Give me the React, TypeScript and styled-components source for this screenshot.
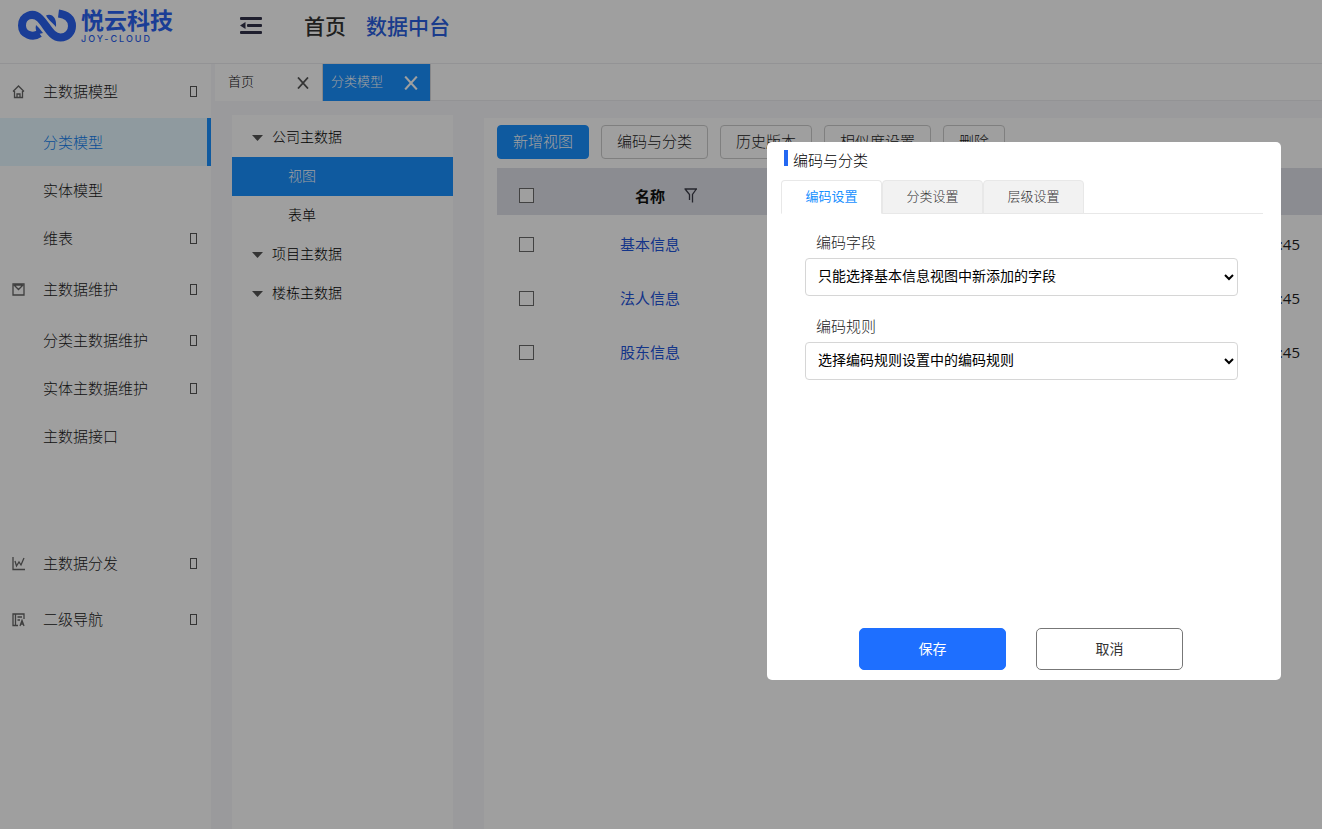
import React from "react";
import styled, { createGlobalStyle, css } from "styled-components";

const GlobalStyle = createGlobalStyle`
  *, *::before, *::after { box-sizing: border-box; }
  body {
    margin: 0;
    background: #f7f7fb;
    color: #222;
    font-family: "Noto Sans CJK SC", "Microsoft YaHei", sans-serif;
    font-size: 15px;
    line-height: 20px;
    font-weight: 300;
    overflow: hidden;
  }
  button, select, input { font: inherit; color: inherit; }
  a { text-decoration: none; color: inherit; }
  h2, ul { margin: 0; padding: 0; font: inherit; }
  ul { list-style: none; }
`;

const Page = styled.div`
  display: flex;
  flex-direction: column;
  height: 100vh;
`;

const Header = styled.header`
  display: flex;
  align-items: flex-start;
  height: 64px;
  padding: 0 18px;
  background: #fff;
  border-bottom: 1px solid #ececef;
`;

const Logo = styled.a`
  display: flex;
  gap: 4px;
  width: 222px;
  padding-top: 9px;
  color: #2a62f0;
`;

const LogoWords = styled.span`
  display: flex;
  flex-direction: column;
`;

const LogoName = styled.span`
  font-family: "Liberation Sans", "Noto Sans CJK SC", sans-serif;
  font-size: 23px;
  line-height: 24px;
  font-weight: 700;
`;

const LogoSub = styled.span`
  font-family: "Inter", sans-serif;
  font-size: 9px;
  line-height: 12px;
  letter-spacing: 2px;
  font-weight: 500;
`;

const IconButton = styled.button`
  display: flex;
  padding: 0;
  border: 0;
  background: none;
  color: inherit;
  cursor: pointer;
`;

const MenuButton = styled(IconButton)`
  width: 64px;
  padding-top: 16px;
  color: #33334a;
`;

const TopNav = styled.nav`
  display: flex;
  gap: 20px;
  padding-top: 10px;
  font-size: 21px;
  line-height: 30px;
  font-weight: 500;
`;

const TopLink = styled.a<{ $active?: boolean }>`
  color: ${(p) => (p.$active ? "#2a5fe0" : "#333")};
`;

const Body = styled.div`
  display: flex;
  flex: 1;
  min-height: 0;
`;

const Sidebar = styled.nav`
  flex: none;
  width: 211px;
  background: #fff;
`;

const MenuGroup = styled.div<{ $tail?: boolean }>`
  padding-bottom: ${(p) => (p.$tail ? 75 : 0)}px;
`;

const MenuRow = styled.a<{ $size: number; $active?: boolean }>`
  display: flex;
  align-items: center;
  height: ${(p) => p.$size}px;
  padding: 0 14px 0 11px;
  color: #222;
  ${(p) =>
    p.$active &&
    css`
      color: #1080f0;
      background: #e6f7ff;
      border-right: 4px solid #1890ff;
    `}
`;

const MenuIcon = styled.span`
  display: flex;
  width: 32px;
  color: #666;
`;

const MissingGlyph = styled.span`
  width: 7px;
  height: 11px;
  margin-left: auto;
  border: 1px solid #555;
`;

const Workspace = styled.main`
  display: flex;
  flex-direction: column;
  flex: 1;
  min-width: 0;
  padding-left: 4px;
`;

const TabBar = styled.div`
  display: flex;
  height: 37px;
  background: #fff;
  border-bottom: 1px solid #ececef;
`;

const PageTab = styled.div<{ $active?: boolean }>`
  display: flex;
  align-items: center;
  justify-content: space-between;
  width: 108px;
  height: 37px;
  padding: ${(p) => (p.$active ? "0 12px 0 8px" : "0 13px")};
  font-size: 13px;
  color: ${(p) => (p.$active ? "#fff" : "#111")};
  background: ${(p) => (p.$active ? "#1890ff" : "#fff")};
  border-right: 1px solid #d9d9dc;
`;

const TabText = styled.span`
  padding-bottom: 3px;
`;

const CloseButton = styled(IconButton)<{ $light?: boolean }>`
  color: ${(p) => (p.$light ? "#fff" : "#555")};
`;

const Columns = styled.div`
  display: flex;
  align-items: stretch;
  flex: 1;
  gap: 31px;
  padding-left: 17px;
`;

const Tree = styled.ul`
  flex: none;
  width: 221px;
  margin-top: 14px;
  padding-top: 3px;
  background: #fff;
  font-size: 14px;
`;

const TreeRow = styled.li<{ $child?: boolean; $active?: boolean }>`
  display: flex;
  align-items: center;
  gap: 9px;
  height: 39px;
  padding-left: ${(p) => (p.$child ? 56 : 20)}px;
  color: ${(p) => (p.$active ? "#fff" : "#000")};
  background: ${(p) => (p.$active ? "#1890ff" : "transparent")};
`;

const Panel = styled.section`
  flex: 1;
  min-width: 0;
  margin-top: 17px;
  padding: 7px 0 0 13px;
  background: #fff;
`;

const Toolbar = styled.div`
  display: flex;
  gap: 12px;
  margin-bottom: 9px;
`;

const ToolButton = styled.button<{ $primary?: boolean }>`
  height: 34px;
  padding: 0 15px 2px;
  border-radius: 4px;
  border: 1px solid ${(p) => (p.$primary ? "#1890ff" : "#ccc")};
  color: ${(p) => (p.$primary ? "#fff" : "#222")};
  background: ${(p) => (p.$primary ? "#1890ff" : "#fff")};
  white-space: nowrap;
`;

const Table = styled.table`
  width: 100%;
  table-layout: fixed;
  border-collapse: collapse;

  th {
    height: 47px;
    padding: 8px 0 0;
    background: #dfe1e8;
    color: #111;
    font-weight: 700;
  }
  td {
    height: 54px;
    padding: 4px 0 0;
    text-align: center;
  }
`;

const CheckCol = styled.col`
  width: 59px;
`;

const NameCol = styled.col`
  width: 188px;
`;

const HeadCell = styled.div`
  display: grid;
  grid-template-columns: 1fr auto 1fr;
  align-items: center;
`;

const FilterButton = styled(IconButton)`
  grid-column: 3;
  padding-left: 19px;
  color: #3c3c48;
`;

const HeadLabel = styled.span`
  grid-column: 2;
`;

const Check = styled.input`
  appearance: none;
  display: block;
  width: 15px;
  height: 15px;
  margin: 0 auto;
  border: 1px solid #6b6b6b;
  background: #fff;
`;

const RowLink = styled.a`
  color: #1f55dc;
  font-weight: 400;
`;

const TimeCell = styled.td`
  && {
    padding-right: 22px;
    text-align: right;
    font-family: "Open Sans", sans-serif;
    font-weight: 400;
  }
`;

const Overlay = styled.div`
  position: fixed;
  inset: 0;
  display: flex;
  align-items: flex-start;
  justify-content: flex-end;
  padding: 142px 41px 0 0;
  background: rgba(0, 0, 0, 0.376);
`;

const Dialog = styled.div`
  display: flex;
  flex-direction: column;
  width: 514px;
  min-height: 538px;
  padding: 8px 18px 10px 14px;
  border-radius: 5px;
  background: #fff;
`;

const DialogTitle = styled.h2`
  display: flex;
  gap: 5px;
  margin-left: 3px;
  margin-bottom: 10px;
  color: #000;

  &::before {
    content: "";
    width: 4px;
    height: 16px;
    background: #2468f2;
  }
`;

const TabList = styled.div`
  display: flex;
  border-bottom: 1px solid #e8e8e8;
`;

const DialogTab = styled.button<{ $active?: boolean }>`
  width: 101px;
  height: 34px;
  margin-bottom: -1px;
  padding: 0 0 3px;
  border: 1px solid #e8e8e8;
  border-bottom-color: ${(p) => (p.$active ? "#fff" : "#e8e8e8")};
  border-radius: 4px 4px 0 0;
  font-size: 13px;
  font-weight: ${(p) => (p.$active ? 400 : 300)};
  color: ${(p) => (p.$active ? "#1890ff" : "#333")};
  background: ${(p) => (p.$active ? "#fff" : "#f2f2f2")};
`;

const Form = styled.div`
  display: flex;
  flex-direction: column;
  gap: 20px;
  padding: 18px 25px 0 24px;
`;

const Field = styled.div`
  display: flex;
  flex-direction: column;
  gap: 6px;
`;

const Label = styled.label`
  padding-left: 11px;
`;

const Select = styled.select`
  height: 38px;
  padding: 0 0 4px 8px;
  border: 1px solid #d6d6d6;
  border-radius: 4px;
  font-size: 14px;
  font-weight: 400;
  color: #000;
  background: #fff;
`;

const Footer = styled.div`
  display: flex;
  justify-content: center;
  gap: 30px;
  margin-top: auto;
  padding-right: 2px;
`;

const DialogButton = styled.button<{ $primary?: boolean }>`
  width: 147px;
  height: 42px;
  padding: 0 0 2px;
  border-radius: 5px;
  border: 1px solid ${(p) => (p.$primary ? "#1e6fff" : "#777")};
  font-size: 14px;
  font-weight: 400;
  color: ${(p) => (p.$primary ? "#fff" : "#333")};
  background: ${(p) => (p.$primary ? "#1e6fff" : "#fff")};
`;

const LogoMark = () => (
  <svg width="59" height="34" viewBox="0 0 59 34" fill="none" aria-hidden="true">
    <path
      d="M21.500 24.500C15 29 4 26 4 16.500C4 6.500 15 2.500 22 9.500C29 16.500 33 28.500 42.500 28.500C49.500 28.500 54 23 54 17C54 9.500 48.500 5.500 40.500 4.500"
      stroke="currentColor"
      strokeWidth="8"
    />
    <path d="M18 16C17 20 18 23 21 25L25 24L21 19Z" fill="currentColor" />
    <path d="M28 6.500C34 4 39 9 38 18C35 14 31 12 28 6.500Z" fill="currentColor" />
  </svg>
);

const FoldIcon = () => (
  <svg width="22" height="19" viewBox="0 0 22 19" fill="currentColor" aria-hidden="true">
    <rect y="1" width="22" height="3" rx="1" />
    <rect x="7" y="8" width="15" height="3" rx="1" />
    <rect y="15" width="22" height="3" rx="1" />
    <path d="M5.500 6V13L0 9.500Z" />
  </svg>
);

const CloseIcon = ({ size }: { size: number }) => (
  <svg width={size} height={size} viewBox="0 0 12 12" stroke="currentColor" strokeWidth="1.800" aria-hidden="true">
    <path d="M1 0.500L11 11.500M11 0.500L1 11.500" />
  </svg>
);

const CaretIcon = () => (
  <svg width="11" height="6" viewBox="0 0 11 6" fill="#555" aria-hidden="true">
    <path d="M0 0H11L5.500 6Z" />
  </svg>
);

const FilterIcon = () => (
  <svg width="14" height="15" viewBox="0 0 14 15" fill="none" stroke="currentColor" strokeWidth="1.300" aria-hidden="true">
    <path d="M0.500 1H13M1.500 1.500L5.500 6.500V12M12 1.500L8.500 6.500V14.500" />
  </svg>
);

const iconPaths = {
  home: "M2 7.500L7.500 2L13 7.500M3.500 7V13.500H11.500V7M6 13.500V10H9V13.500",
  mail: "M2 2H13V13H2ZM3 3L7.500 7.500L12 3M4 3H11",
  chart: "M2 1V13.500H14M4 5L5.500 10L8 6L10 9L13 2",
  book: "M13 7V2H2V13.500H7M4.500 2V13M6.500 5H11M6.500 8H9M9 14L11 8.500L13 14M10 12H12",
};

const SideIcon = ({ name }: { name: keyof typeof iconPaths }) => (
  <svg width="15" height="15" viewBox="0 0 15 15" fill="none" stroke="currentColor" strokeWidth="1.300" aria-hidden="true">
    <path d={iconPaths[name]} />
  </svg>
);

type Item = { text: string; more?: boolean; active?: boolean };
type Group = Item & { icon: keyof typeof iconPaths; size: number; tail?: boolean; items: Item[] };

const menu: Group[] = [
  {
    text: "主数据模型",
    icon: "home",
    size: 54,
    items: [{ text: "分类模型", active: true }, { text: "实体模型" }, { text: "维表", more: true }],
  },
  {
    text: "主数据维护",
    icon: "mail",
    size: 54,
    tail: true,
    items: [
      { text: "分类主数据维护", more: true },
      { text: "实体主数据维护", more: true },
      { text: "主数据接口" },
    ],
  },
  { text: "主数据分发", icon: "chart", size: 56, items: [] },
  { text: "二级导航", icon: "book", size: 56, items: [] },
];

const tree = [
  { text: "公司主数据" },
  { text: "视图", child: true, active: true },
  { text: "表单", child: true },
  { text: "项目主数据" },
  { text: "楼栋主数据" },
];

const rows = ["基本信息", "法人信息", "股东信息"];

export default function App() {
  return (
    <>
      <GlobalStyle />
      <Page>
        <Header>
          <Logo href="#">
            <LogoMark />
            <LogoWords>
              <LogoName>悦云科技</LogoName>
              <LogoSub>JOY-CLOUD</LogoSub>
            </LogoWords>
          </Logo>
          <MenuButton aria-label="收起菜单">
            <FoldIcon />
          </MenuButton>
          <TopNav>
            <TopLink href="#">首页</TopLink>
            <TopLink href="#" $active>
              数据中台
            </TopLink>
          </TopNav>
        </Header>
        <Body>
          <Sidebar>
            {menu.map((group) => (
              <MenuGroup key={group.text} $tail={group.tail}>
                <MenuRow href="#" $size={group.size}>
                  <MenuIcon>
                    <SideIcon name={group.icon} />
                  </MenuIcon>
                  {group.text}
                  <MissingGlyph />
                </MenuRow>
                {group.items.map((item) => (
                  <MenuRow key={item.text} href="#" $size={48} $active={item.active}>
                    <MenuIcon />
                    {item.text}
                    {item.more && <MissingGlyph />}
                  </MenuRow>
                ))}
              </MenuGroup>
            ))}
          </Sidebar>
          <Workspace>
            <TabBar>
              <PageTab>
                <TabText>首页</TabText>
                <CloseButton aria-label="关闭首页">
                  <CloseIcon size={12} />
                </CloseButton>
              </PageTab>
              <PageTab $active>
                <TabText>分类模型</TabText>
                <CloseButton $light aria-label="关闭分类模型">
                  <CloseIcon size={14} />
                </CloseButton>
              </PageTab>
            </TabBar>
            <Columns>
              <Tree>
                {tree.map((node) => (
                  <TreeRow key={node.text} $child={node.child} $active={node.active}>
                    {!node.child && <CaretIcon />}
                    <TabText>{node.text}</TabText>
                  </TreeRow>
                ))}
              </Tree>
              <Panel>
                <Toolbar>
                  <ToolButton $primary>新增视图</ToolButton>
                  <ToolButton>编码与分类</ToolButton>
                  <ToolButton>历史版本</ToolButton>
                  <ToolButton>相似度设置</ToolButton>
                  <ToolButton>删除</ToolButton>
                </Toolbar>
                <Table>
                  <colgroup>
                    <CheckCol />
                    <NameCol />
                    <col />
                  </colgroup>
                  <thead>
                    <tr>
                      <th>
                        <Check type="checkbox" aria-label="全选" />
                      </th>
                      <th>
                        <HeadCell>
                          <HeadLabel>名称</HeadLabel>
                          <FilterButton aria-label="筛选名称">
                            <FilterIcon />
                          </FilterButton>
                        </HeadCell>
                      </th>
                      <th aria-label="时间" />
                    </tr>
                  </thead>
                  <tbody>
                    {rows.map((name) => (
                      <tr key={name}>
                        <td>
                          <Check type="checkbox" aria-label={name} />
                        </td>
                        <td>
                          <RowLink href="#">{name}</RowLink>
                        </td>
                        <TimeCell>:45</TimeCell>
                      </tr>
                    ))}
                  </tbody>
                </Table>
              </Panel>
            </Columns>
          </Workspace>
        </Body>
      </Page>
      <Overlay>
        <Dialog role="dialog" aria-modal="true" aria-labelledby="dialog-title">
          <DialogTitle id="dialog-title">编码与分类</DialogTitle>
          <TabList role="tablist">
            <DialogTab role="tab" aria-selected="true" $active>
              编码设置
            </DialogTab>
            <DialogTab role="tab" aria-selected="false">
              分类设置
            </DialogTab>
            <DialogTab role="tab" aria-selected="false">
              层级设置
            </DialogTab>
          </TabList>
          <Form>
            <Field>
              <Label htmlFor="code-field">编码字段</Label>
              <Select id="code-field">
                <option>只能选择基本信息视图中新添加的字段</option>
              </Select>
            </Field>
            <Field>
              <Label htmlFor="code-rule">编码规则</Label>
              <Select id="code-rule">
                <option>选择编码规则设置中的编码规则</option>
              </Select>
            </Field>
          </Form>
          <Footer>
            <DialogButton $primary>保存</DialogButton>
            <DialogButton>取消</DialogButton>
          </Footer>
        </Dialog>
      </Overlay>
    </>
  );
}
